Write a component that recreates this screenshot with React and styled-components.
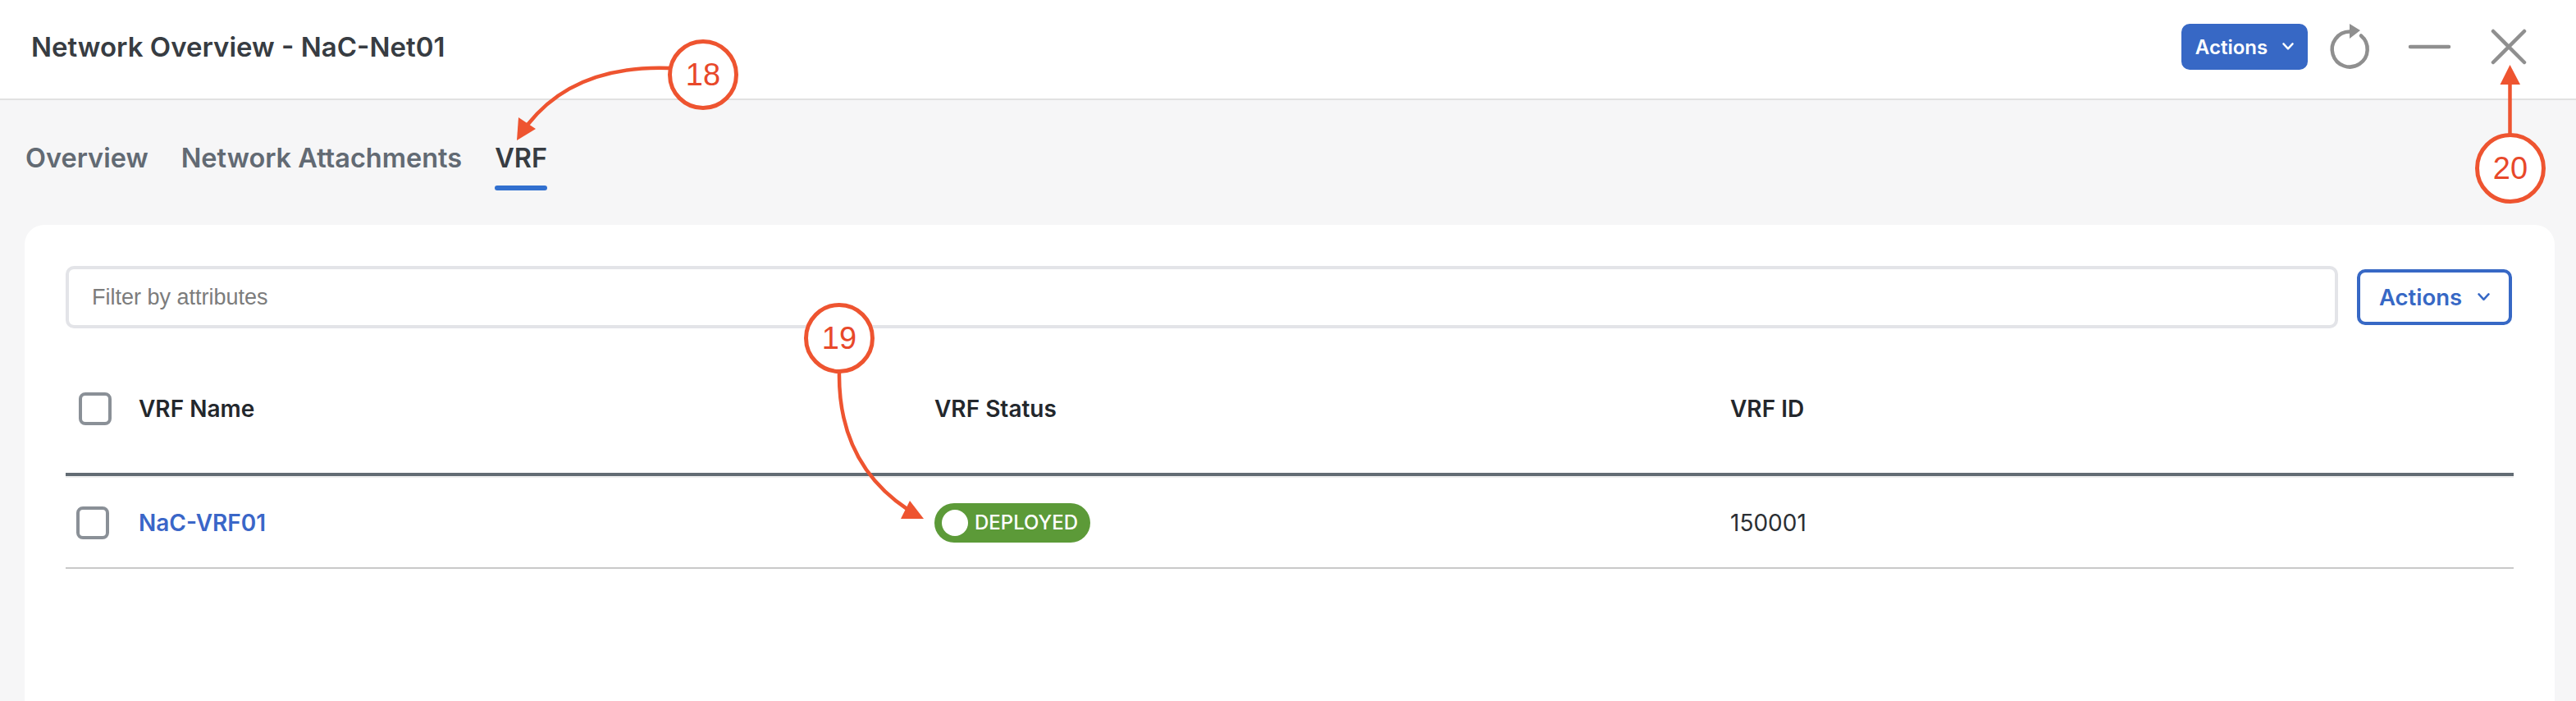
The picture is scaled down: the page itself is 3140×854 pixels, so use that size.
import React from 'react'
import styled, { createGlobalStyle } from 'styled-components'

const Global = createGlobalStyle`
    html, body, #root { margin:0; padding:0; height:100%; }
    body { background:#f6f6f7; font-family:"Inter","Liberation Sans",sans-serif; }
    * { box-sizing:border-box; }
`

const Page = styled.div`
    position:relative;
    width:3140px;
    height:854px;
    display:flex;
    flex-direction:column;
    overflow:hidden;
    background:#f6f6f7;
`

const Header = styled.header`
    height:122px;
    flex:none;
    display:flex;
    align-items:center;
    padding:0 59px 6px 38px;
    background:#fff;
    border-bottom:2px solid #e1e1e1;
`

const Title = styled.h1`
    margin:0;
    flex:1;
    font-size:33px;
    font-weight:600;
    color:#373c42;
`

const HeaderTools = styled.div`
    display:flex;
    align-items:center;
`

const ActionButton = styled.button`
    display:flex;
    align-items:center;
    justify-content:center;
    gap:${p => p.$outline ? '19px' : '18px'};
    padding:0;
    font-family:"Inter","Liberation Sans",sans-serif;
    font-weight:600;
    border-radius:10px;
    cursor:pointer;
    width:${p => p.$outline ? '189px' : '154px'};
    height:${p => p.$outline ? '68px' : '56px'};
    font-size:${p => p.$outline ? '27.5px' : '24px'};
    color:${p => p.$outline ? '#3768c5' : '#fff'};
    background:${p => p.$outline ? '#fff' : '#3768c5'};
    border:${p => p.$outline ? '4px solid #3768c5' : 'none'};
`

const ToolIcon = styled.svg`
    display:block;
    flex:none;
    fill:none;
    stroke:#8f8f8f;
    stroke-width:4.5;
    stroke-linecap:round;
    margin-left:${p => p.$gap}px;
`

const Tabs = styled.nav`
    flex:none;
    height:110px;
    display:flex;
    align-items:flex-end;
    gap:40px;
    padding-left:31px;
`

const Tab = styled.a`
    position:relative;
    padding-bottom:21px;
    font-size:32.5px;
    line-height:36px;
    font-weight:600;
    color:${p => p.$active ? '#373c42' : '#626a73'};
    &::after {
        content:"";
        display:${p => p.$active ? 'block' : 'none'};
        position:absolute;
        left:0;
        right:0;
        bottom:0;
        height:6px;
        border-radius:3px;
        background:#3270cf;
    }
`

const Card = styled.section`
    flex:1;
    margin:42px 26px 0 30px;
    padding:50px 50px 0;
    background:#fff;
    border-radius:24px 24px 0 0;
`

const Toolbar = styled.div`
    display:flex;
    align-items:center;
    gap:23px;
    padding-right:2px;
`

const Filter = styled.input`
    flex:1;
    height:76px;
    padding:0 28px;
    font-family:"Liberation Sans",Arial,sans-serif;
    font-size:27px;
    color:#333;
    background:#fff;
    border:4px solid #e3e4e8;
    border-radius:10px;
    outline:none;
    &::placeholder { color:#7c7c7c; opacity:1; }
`

const Row = styled.div`
    display:grid;
    grid-template-columns:89px 970px 970px 1fr;
    align-items:center;
`

const HeadRow = styled(Row)`
    height:160px;
    margin-top:20px;
    font-size:28px;
    font-weight:600;
    color:#23272c;
    border-bottom:4px solid #626b73;
    box-shadow:0 2px 0 #efefef;
`

const BodyRow = styled(Row)`
    height:111px;
    margin-top:2px;
    font-size:28px;
    color:#2b2f34;
    border-bottom:2px solid #c9c9c9;
`

const CheckCell = styled.div`
    padding-left:${p => p.$inset}px;
`

const Check = styled.span`
    display:block;
    width:40px;
    height:40px;
    border:4px solid #8a9097;
    border-radius:8px;
    background:#fff;
`

const NameLink = styled.a`
    font-weight:600;
    color:#3a66c8;
`

const Badge = styled.span`
    display:inline-flex;
    align-items:center;
    gap:8px;
    height:48px;
    padding:0 15px 0 9px;
    border-radius:24px;
    background:#5c9a38;
    color:#fff;
    font-size:24px;
    font-weight:500;
`

const BadgeDot = styled.i`
    width:32px;
    height:32px;
    border-radius:50%;
    background:#fff;
`

const Overlay = styled.svg`
    position:absolute;
    left:0;
    top:0;
    pointer-events:none;
`

const Callout = styled.div`
    position:absolute;
    left:${p => p.$x - 43}px;
    top:${p => p.$y - 43}px;
    width:86px;
    height:86px;
    display:flex;
    align-items:center;
    justify-content:center;
    border:5px solid #ee5430;
    border-radius:50%;
    background:#fff;
    font-family:"Liberation Sans",Arial,sans-serif;
    font-size:38px;
    color:#e8482a;
`

function Chevron({ size }) {
    return (
        <svg width={size} height={size * 0.66} viewBox="0 0 15 10" fill="none" stroke="currentColor" strokeWidth="2.6" strokeLinecap="round" strokeLinejoin="round">
            <path d="M1.5 1.5 L7.5 8 L13.5 1.5" />
        </svg>
    )
}

export default function App() {
    return (
        <Page>
            <Global />
            <Header>
                <Title>Network Overview - NaC-Net01</Title>
                <HeaderTools>
                    <ActionButton>Actions<Chevron size={14} /></ActionButton>
                    <ToolIcon $gap={24} width="54" height="60" viewBox="0 0 54 60">
                        <path d="M27 11.5 A21.5 21.5 0 1 0 41 16.5" />
                        <path d="M27 2 L40 10 L27 20 Z" fill="#8f8f8f" stroke="none" />
                    </ToolIcon>
                    <ToolIcon $gap={43} width="55" height="8" viewBox="0 0 55 8">
                        <path d="M4 4 H51" />
                    </ToolIcon>
                    <ToolIcon $gap={46} width="46" height="46" viewBox="0 0 46 46">
                        <path d="M4 4 L42 42 M42 4 L4 42" />
                    </ToolIcon>
                </HeaderTools>
            </Header>

            <Tabs>
                <Tab>Overview</Tab>
                <Tab>Network Attachments</Tab>
                <Tab $active>VRF</Tab>
            </Tabs>

            <Card>
                <Toolbar>
                    <Filter placeholder="Filter by attributes" />
                    <ActionButton $outline>Actions<Chevron size={15} /></ActionButton>
                </Toolbar>
                <HeadRow>
                    <CheckCell $inset={16}><Check /></CheckCell>
                    <div>VRF Name</div>
                    <div>VRF Status</div>
                    <div>VRF ID</div>
                </HeadRow>
                <BodyRow>
                    <CheckCell $inset={13}><Check /></CheckCell>
                    <div><NameLink>NaC-VRF01</NameLink></div>
                    <div><Badge><BadgeDot />DEPLOYED</Badge></div>
                    <div>150001</div>
                </BodyRow>
            </Card>

            <Overlay width="3140" height="854" viewBox="0 0 3140 854" fill="none" stroke="#ee5430" strokeWidth="4.5">
                <path d="M816 83 C760 81 690 92 643 152" />
                <path d="M632 143 L653 157 L630 171 Z" fill="#ee5430" stroke="none" />
                <path d="M1023 453 C1022 520 1045 580 1107 621" />
                <path d="M1109 610 L1126 632 L1098 632 Z" fill="#ee5430" stroke="none" />
                <path d="M3059.5 165 V100" />
                <path d="M3059.5 79 L3072 103 L3047.5 103 Z" fill="#ee5430" stroke="none" />
            </Overlay>
            <Callout $x={857} $y={91}>18</Callout>
            <Callout $x={1023} $y={412}>19</Callout>
            <Callout $x={3060} $y={205}>20</Callout>
        </Page>
    )
}
